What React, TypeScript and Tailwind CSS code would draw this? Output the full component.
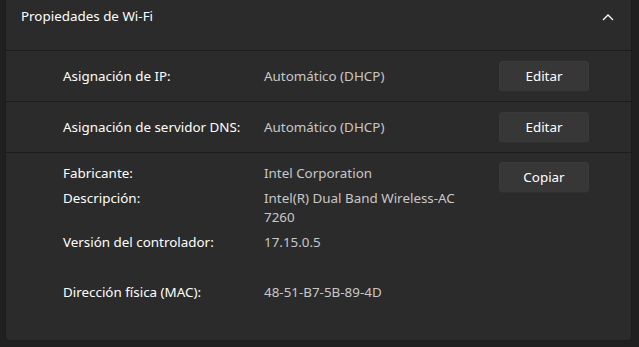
const font = { fontFamily: '"Noto Sans", "Open Sans", sans-serif' };

type Detail = { label: string; value: string; gap: string };

const details: Detail[] = [
  { label: 'Fabricante:', value: 'Intel Corporation', gap: 'mt-0' },
  { label: 'Descripción:', value: 'Intel(R) Dual Band Wireless-AC 7260', gap: 'mt-[6px]' },
  { label: 'Versión del controlador:', value: '17.15.0.5', gap: 'mt-[6px]' },
  { label: 'Dirección física (MAC):', value: '48-51-B7-5B-89-4D', gap: 'mt-[31px]' },
];

const ActionButton = ({ children }: { children: React.ReactNode }) => (
  <button className="h-[31px] w-[90px] rounded-[4px] border border-[#3a3a3a] border-b-[#303030] bg-[#373737] text-[13.4px] text-white">
    {children}
  </button>
);

const SettingRow = ({ label, value }: { label: string; value: string }) => (
  <div className="flex h-[51px] items-center border-b border-[#1d1d1d] pl-[57px] pr-[42px]">
    <span className="w-[201px] text-white">{label}</span>
    <span className="flex-1 text-[#c8c8c8]">{value}</span>
    <ActionButton>Editar</ActionButton>
  </div>
);

export default function App() {
  return (
    <div className="h-[347px] w-[639px] bg-[#202020] text-[13.4px] leading-[19px]" style={font}>
      <div className="ml-[5px] w-[627px] rounded-b-[4px] border-x border-b border-[#1d1d1d] bg-[#2b2b2b]">
        {/* cabecera */}
        <div className="flex h-[51px] items-start justify-between border-b border-[#1d1d1d] pl-[15px] pr-[17px] pt-[7px]">
          <span className="text-white">Propiedades de Wi-Fi</span>
          <svg width="12" height="8" viewBox="0 0 12 8" className="mt-[6px]">
            <polyline points="1,7 6,2 11,7" fill="none" stroke="#ffffff" strokeWidth="1.3" />
          </svg>
        </div>

        <SettingRow label="Asignación de IP:" value="Automático (DHCP)" />
        <SettingRow label="Asignación de servidor DNS:" value="Automático (DHCP)" />

        {/* detalles */}
        <div className="flex h-[187px] items-start pl-[57px] pr-[42px] pt-[11px]">
          <div className="flex flex-1 flex-col">
            {details.map((d) => (
              <div key={d.label} className={`flex ${d.gap}`}>
                <span className="w-[201px] shrink-0 text-white">{d.label}</span>
                <span className="w-[205px] text-[#c8c8c8]">{d.value}</span>
              </div>
            ))}
          </div>
          <div className="mt-[-2px]">
            <ActionButton>Copiar</ActionButton>
          </div>
        </div>
      </div>
    </div>
  );
}
